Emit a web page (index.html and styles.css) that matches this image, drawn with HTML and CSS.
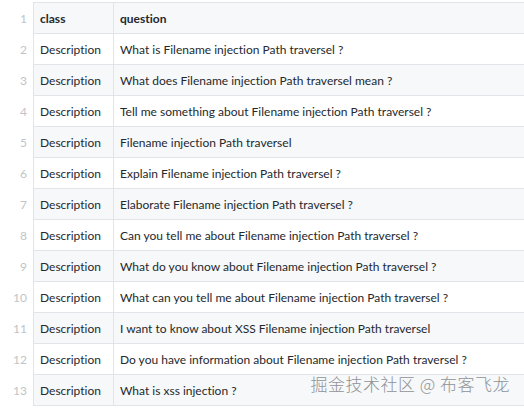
FILE: index.html
```html
<!DOCTYPE html>
<html>
<head>
<meta charset="utf-8">
<link rel="stylesheet" href="styles.css">
</head>
<body>
<div class="wrap">
<table class="csv">
<tbody>
<tr><td class="num">1</td><th class="c1">class</th><th class="c2">question</th></tr>
<tr><td class="num">2</td><td>Description</td><td>What is Filename injection Path traversel ?</td></tr>
<tr><td class="num">3</td><td>Description</td><td>What does Filename injection Path traversel mean ?</td></tr>
<tr><td class="num">4</td><td>Description</td><td>Tell me something about Filename injection Path traversel ?</td></tr>
<tr><td class="num">5</td><td>Description</td><td>Filename injection Path traversel</td></tr>
<tr><td class="num">6</td><td>Description</td><td>Explain Filename injection Path traversel ?</td></tr>
<tr><td class="num">7</td><td>Description</td><td>Elaborate Filename injection Path traversel ?</td></tr>
<tr><td class="num">8</td><td>Description</td><td>Can you tell me about Filename injection Path traversel ?</td></tr>
<tr><td class="num">9</td><td>Description</td><td>What do you know about Filename injection Path traversel ?</td></tr>
<tr><td class="num">10</td><td>Description</td><td>What can you tell me about Filename injection Path traversel ?</td></tr>
<tr><td class="num">11</td><td>Description</td><td>I want to know about XSS Filename injection Path traversel</td></tr>
<tr><td class="num">12</td><td>Description</td><td>Do you have information about Filename injection Path traversel ?</td></tr>
<tr><td class="num">13</td><td>Description</td><td>What is xss injection ?</td></tr>
</tbody>
</table>
<div class="mark">掘金技术社区 @ 布客飞龙</div>
</div>
</body>
</html>
```

FILE: styles.css
```css
html, body {
  margin: 0;
  padding: 0;
  background: #fff;
}
.wrap {
  position: relative;
  width: 524px;
  height: 408px;
  overflow: hidden;
  padding-top: 2px;
  box-sizing: border-box;
}
.csv {
  border-collapse: collapse;
  font-family: "Lato", "Open Sans", sans-serif;
  font-size: 12px;
  font-variant-ligatures: none;
  color: #24292e;
  width: 560px;
}
.csv td, .csv th {
  height: 29px;
  padding: 1px 6px 0;
  border: 1px solid #e1e4e8;
  text-align: left;
  font-weight: 400;
  white-space: nowrap;
}
.csv th {
  font-weight: 700;
}
.csv tr:nth-child(odd) td, .csv tr:nth-child(odd) th {
  background: #f6f8fa;
}
.csv tr td.num {
  background: #fff;
  width: 27px;
  text-align: right;
  color: #c0c4c8;
  padding: 1px 6px 0 0;
  border-left: none;
  border-top: none;
  border-bottom: none;
}
.csv .c1 {
  width: 67px;
}
.mark {
  position: absolute;
  right: 14px;
  bottom: 12px;
  font-family: "Noto Sans CJK SC", sans-serif;
  font-size: 17px;
  font-weight: 300;
  color: #909396;
  letter-spacing: 0.5px;
}
```
